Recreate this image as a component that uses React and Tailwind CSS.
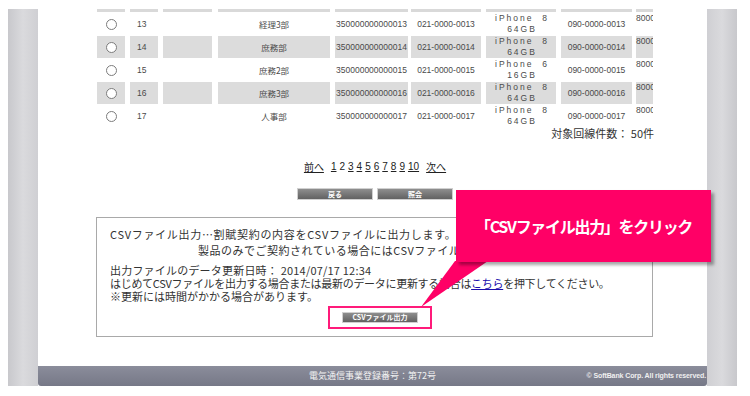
import React from 'react';

const jp = { fontFamily: '"Noto Sans CJK JP", "Liberation Sans", sans-serif' };

const rows = [
  { no: 13, dept: '経理3部', model: '8', gb: '64GB' },
  { no: 14, dept: '庶務部', model: '8', gb: '64GB' },
  { no: 15, dept: '庶務2部', model: '6', gb: '16GB' },
  { no: 16, dept: '庶務3部', model: '8', gb: '64GB' },
  { no: 17, dept: '人事部', model: '8', gb: '64GB' },
];

const cols = [28, 28, 49, 112, 73, 70, 70, 71, 40];
const gaps = [0, 5, 5, 6, 5, 3, 5, 5, 4];

function Cell({ i, shade, className = '', children }) {
  return (
    <div
      className={`shrink-0 h-full ${shade ? 'bg-[#dcdcdc]' : ''} ${className}`}
      style={{ width: cols[i], marginLeft: gaps[i] }}
    >
      {children}
    </div>
  );
}

function Row({ r, shade }) {
  const pad = String(r.no).padStart(4, '0');
  return (
    <div className="flex h-[22px] mt-[1px] text-[8.5px] text-[#4a4a4a]" style={{ fontFamily: '"Liberation Sans", sans-serif' }}>
      <Cell i={0} shade={shade} className="flex items-center justify-center">
        <span className="w-[11px] h-[11px] rounded-full border border-[#7c7c7c] bg-white" />
      </Cell>
      <Cell i={1} shade={shade} className="flex items-center pl-[7px]">{r.no}</Cell>
      <Cell i={2} shade={shade} />
      <Cell i={3} shade={shade} className="flex items-center justify-center" >
        <span style={jp}>{r.dept}</span>
      </Cell>
      <Cell i={4} shade={shade} className="flex items-center justify-center">3500000000{String(r.no).padStart(5, '0')}</Cell>
      <Cell i={5} shade={shade} className="flex items-center justify-center">021-0000-{pad}</Cell>
      <Cell i={6} shade={shade} className="flex flex-col items-center leading-[11px] tracking-[2px] pl-[2px]">
        <span>iPhone&nbsp;&nbsp;{r.model}</span>
        <span>{r.gb}</span>
      </Cell>
      <Cell i={7} shade={shade} className="flex items-center justify-center">090-0000-{pad}</Cell>
      <Cell i={8} shade={shade} className="leading-[9px] pt-[1px]">8000</Cell>
    </div>
  );
}

export default function App() {
  return (
    <div className="w-[750px] h-[396px] bg-white relative overflow-hidden" style={jp}>
      <div className="flex pt-[9px] pl-[8px] h-[386px]">
        <div className="w-[30px] h-full bg-gradient-to-r from-[#c8c8cc] via-[#dadadd] to-[#cfcfd3]" />

        <div className="w-[669px] h-full flex flex-col">
          <div className="flex-1 pl-[59px]">
            {/* 明細テーブル */}
            <div className="w-[556px] overflow-hidden">
              <div className="flex h-[3px]">
                {cols.map((w, i) => (
                  <div key={i} className="shrink-0 bg-[#d9d9d9]" style={{ width: w, marginLeft: gaps[i] }} />
                ))}
              </div>
              {rows.map((r, i) => (
                <Row key={r.no} r={r} shade={i % 2 === 1} />
              ))}
            </div>
            <div className="w-[557px] text-right text-[11px] leading-[13px] text-[#333]">対象回線件数： 50件</div>

            {/* ページ送り */}
            <div className="w-[556px] flex justify-center items-center mt-[21px] text-[10px] leading-[12px] text-[#222]">
              <span className="underline">前へ</span>
              <div className="flex gap-[3px] ml-[7px] mr-[7px]" style={{ fontFamily: '"Liberation Sans", sans-serif' }}>
                <span className="underline">1</span>
                <span>2</span>
                {[3, 4, 5, 6, 7, 8, 9, 10].map(n => (
                  <span key={n} className="underline">{n}</span>
                ))}
              </div>
              <span className="underline">次へ</span>
            </div>

            <div className="w-[556px] flex justify-center gap-[4px] mt-[15px]">
              <button className="w-[76px] h-[12px] bg-gradient-to-b from-[#8e8e8e] to-[#626262] border border-[#d0d0d0] text-white text-[7px] font-bold leading-[10px]">戻る</button>
              <button className="w-[76px] h-[12px] bg-gradient-to-b from-[#8e8e8e] to-[#626262] border border-[#d0d0d0] text-white text-[7px] font-bold leading-[10px]">照会</button>
            </div>

            {/* CSV出力 */}
            <div className="w-[557px] -ml-[1px] mt-[17px] h-[120px] border border-[#a9a9a9] pl-[13px] pt-[8px] text-[11px] text-[#333]">
              <p className="leading-[16px] tracking-[0.7px] whitespace-nowrap">CSVファイル出力…割賦契約の内容をCSVファイルに出力します。</p>
              <p className="leading-[16px] pl-[88px] tracking-[0.5px] whitespace-nowrap">製品のみでご契約されている場合にはCSVファイル出力はできません。</p>
              <p className="leading-[14px] mt-[5px] tracking-[0.2px]">出力ファイルのデータ更新日時： 2014/07/17 12:34</p>
              <p className="leading-[13px] tracking-[-0.3px] whitespace-nowrap">はじめてCSVファイルを出力する場合または最新のデータに更新する場合は<span className="text-[#1a0dab] underline">こちら</span>を押下してください。</p>
              <p className="leading-[13px]">※更新には時間がかかる場合があります。</p>
              <div className="flex justify-center mt-[3px] pr-[2px]">
                <div className="border-[2px] border-[#ff1a7a] px-[12px] py-[4px]">
                  <button className="block w-[76px] h-[11px] bg-gradient-to-b from-[#8e8e8e] to-[#626262] border border-[#d0d0d0] text-white text-[7px] font-bold leading-[9px]">CSVファイル出力</button>
                </div>
              </div>
            </div>
          </div>

          <footer className="h-[20px] bg-gradient-to-b from-[#8b8d9b] to-[#767887] rounded-b-[3px] flex items-center relative">
            <span className="absolute left-0 right-0 text-center text-[9px] text-[#f2f2f2]">電気通信事業登録番号：第72号</span>
            <span className="ml-auto pr-[1px] text-[7px] font-bold tracking-[-0.1px] text-[#f0f0f0]" style={{ fontFamily: '"Liberation Sans Narrow", "Liberation Sans", sans-serif' }}>© SoftBank Corp. All rights reserved.</span>
          </footer>
        </div>

        <div className="w-[30px] h-full bg-gradient-to-r from-[#cfcfd3] via-[#dadadd] to-[#c8c8cc]" />
      </div>

      {/* 吹き出し */}
      <svg className="absolute left-0 top-0" width="750" height="396">
        <polygon points="455,261 488,261 421,307" fill="#ff0066" />
      </svg>
      <div className="absolute left-[456px] top-[190px] w-[255px] h-[72px] bg-[#ff0066] shadow-[3px_3px_3px_rgba(0,0,0,0.35)] flex items-center justify-center">
        <span className="text-white text-[16px] font-bold tracking-[-1.3px]">「CSVファイル出力」をクリック</span>
      </div>
    </div>
  );
}
